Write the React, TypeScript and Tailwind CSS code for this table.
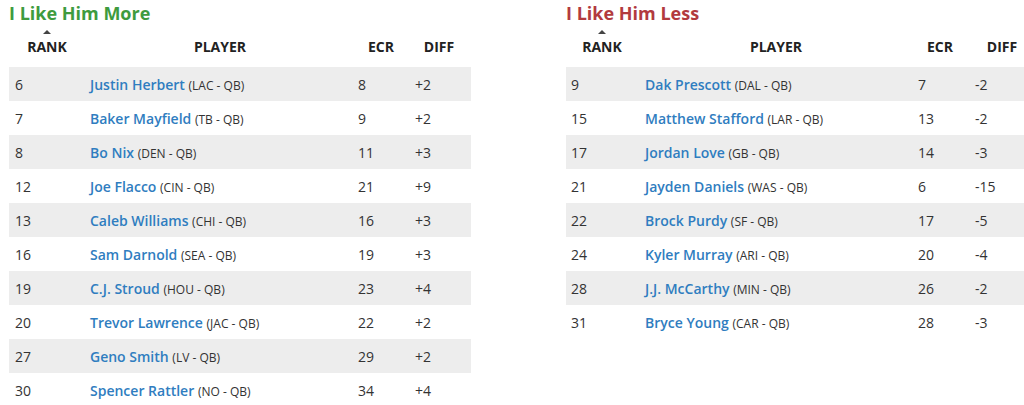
import React from "react";

type Row = { rank: number; name: string; team: string; ecr: number; diff: string };

const more: Row[] = [
  { rank: 6, name: "Justin Herbert", team: "LAC - QB", ecr: 8, diff: "+2" },
  { rank: 7, name: "Baker Mayfield", team: "TB - QB", ecr: 9, diff: "+2" },
  { rank: 8, name: "Bo Nix", team: "DEN - QB", ecr: 11, diff: "+3" },
  { rank: 12, name: "Joe Flacco", team: "CIN - QB", ecr: 21, diff: "+9" },
  { rank: 13, name: "Caleb Williams", team: "CHI - QB", ecr: 16, diff: "+3" },
  { rank: 16, name: "Sam Darnold", team: "SEA - QB", ecr: 19, diff: "+3" },
  { rank: 19, name: "C.J. Stroud", team: "HOU - QB", ecr: 23, diff: "+4" },
  { rank: 20, name: "Trevor Lawrence", team: "JAC - QB", ecr: 22, diff: "+2" },
  { rank: 27, name: "Geno Smith", team: "LV - QB", ecr: 29, diff: "+2" },
  { rank: 30, name: "Spencer Rattler", team: "NO - QB", ecr: 34, diff: "+4" },
];

const less: Row[] = [
  { rank: 9, name: "Dak Prescott", team: "DAL - QB", ecr: 7, diff: "-2" },
  { rank: 15, name: "Matthew Stafford", team: "LAR - QB", ecr: 13, diff: "-2" },
  { rank: 17, name: "Jordan Love", team: "GB - QB", ecr: 14, diff: "-3" },
  { rank: 21, name: "Jayden Daniels", team: "WAS - QB", ecr: 6, diff: "-15" },
  { rank: 22, name: "Brock Purdy", team: "SF - QB", ecr: 17, diff: "-5" },
  { rank: 24, name: "Kyler Murray", team: "ARI - QB", ecr: 20, diff: "-4" },
  { rank: 28, name: "J.J. McCarthy", team: "MIN - QB", ecr: 26, diff: "-2" },
  { rank: 31, name: "Bryce Young", team: "CAR - QB", ecr: 28, diff: "-3" },
];

type Cols = {
  rank: string;
  player: string;
  ecr: string;
  diff: string;
  rankPad: string;
  playerPad: string;
  ecrPad: string;
  diffPad: string;
};

const leftCols: Cols = {
  rank: "w-[76px]",
  player: "w-[270px]",
  ecr: "w-[52px]",
  diff: "w-[64px]",
  rankPad: "pl-[6px]",
  playerPad: "pl-[5px]",
  ecrPad: "pl-[3px]",
  diffPad: "pl-[8px]",
};

const rightCols: Cols = {
  rank: "w-[72px]",
  player: "w-[276px]",
  ecr: "w-[52px]",
  diff: "w-[72px]",
  rankPad: "pl-[5px]",
  playerPad: "pl-[7px]",
  ecrPad: "pl-[4px]",
  diffPad: "pl-[9px]",
};

const RankTable: React.FC<{ title: string; titleClass: string; rows: Row[]; cols: Cols }> = ({
  title,
  titleClass,
  rows,
  cols,
}) => (
  <section className="flex w-[462px] shrink-0 flex-col">
    <h2 className={`h-[28px] pt-[1px] text-[18px] leading-[24px] font-bold ${titleClass}`}>{title}</h2>
    <div className="flex h-[39px] items-end pb-[13px] text-[14px] leading-[15px] font-bold text-[#222]">
      <div className={`${cols.rank} flex shrink-0 flex-col items-center`}>
        <span className="mb-[5px] h-0 w-0 border-x-[4px] border-b-[4px] border-x-transparent border-b-[#444]" />
        <span>RANK</span>
      </div>
      <div className={`${cols.player} shrink-0 text-center`}>PLAYER</div>
      <div className={`${cols.ecr} shrink-0 text-center`}>ECR</div>
      <div className={`${cols.diff} shrink-0 text-center`}>DIFF</div>
    </div>
    <div className="flex flex-col">
      {rows.map((r, i) => (
        <div
          key={r.name}
          className={`flex h-[34px] shrink-0 items-center text-[14px] text-[#333] ${i % 2 === 0 ? "bg-[#ededed]" : "bg-white"}`}
        >
          <div className={`${cols.rank} ${cols.rankPad} shrink-0`}>{r.rank}</div>
          <div className={`${cols.player} ${cols.playerPad} shrink-0 whitespace-nowrap`}>
            <a className="font-semibold text-[#2f7dc0]">{r.name}</a>{" "}
            <span className="text-[12px] text-[#333]">({r.team})</span>
          </div>
          <div className={`${cols.ecr} ${cols.ecrPad} shrink-0`}>{r.ecr}</div>
          <div className={`${cols.diff} ${cols.diffPad} shrink-0`}>{r.diff}</div>
        </div>
      ))}
    </div>
  </section>
);

export default function App() {
  return (
    <div className="h-[405px] w-[1024px] overflow-hidden bg-white font-['Open_Sans',sans-serif]">
      <div className="flex gap-[95px] pl-[9px]">
        <RankTable title="I Like Him More" titleClass="text-[#3e9b3e]" rows={more} cols={leftCols} />
        <RankTable title="I Like Him Less" titleClass="text-[#b23a3e]" rows={less} cols={rightCols} />
      </div>
    </div>
  );
}
